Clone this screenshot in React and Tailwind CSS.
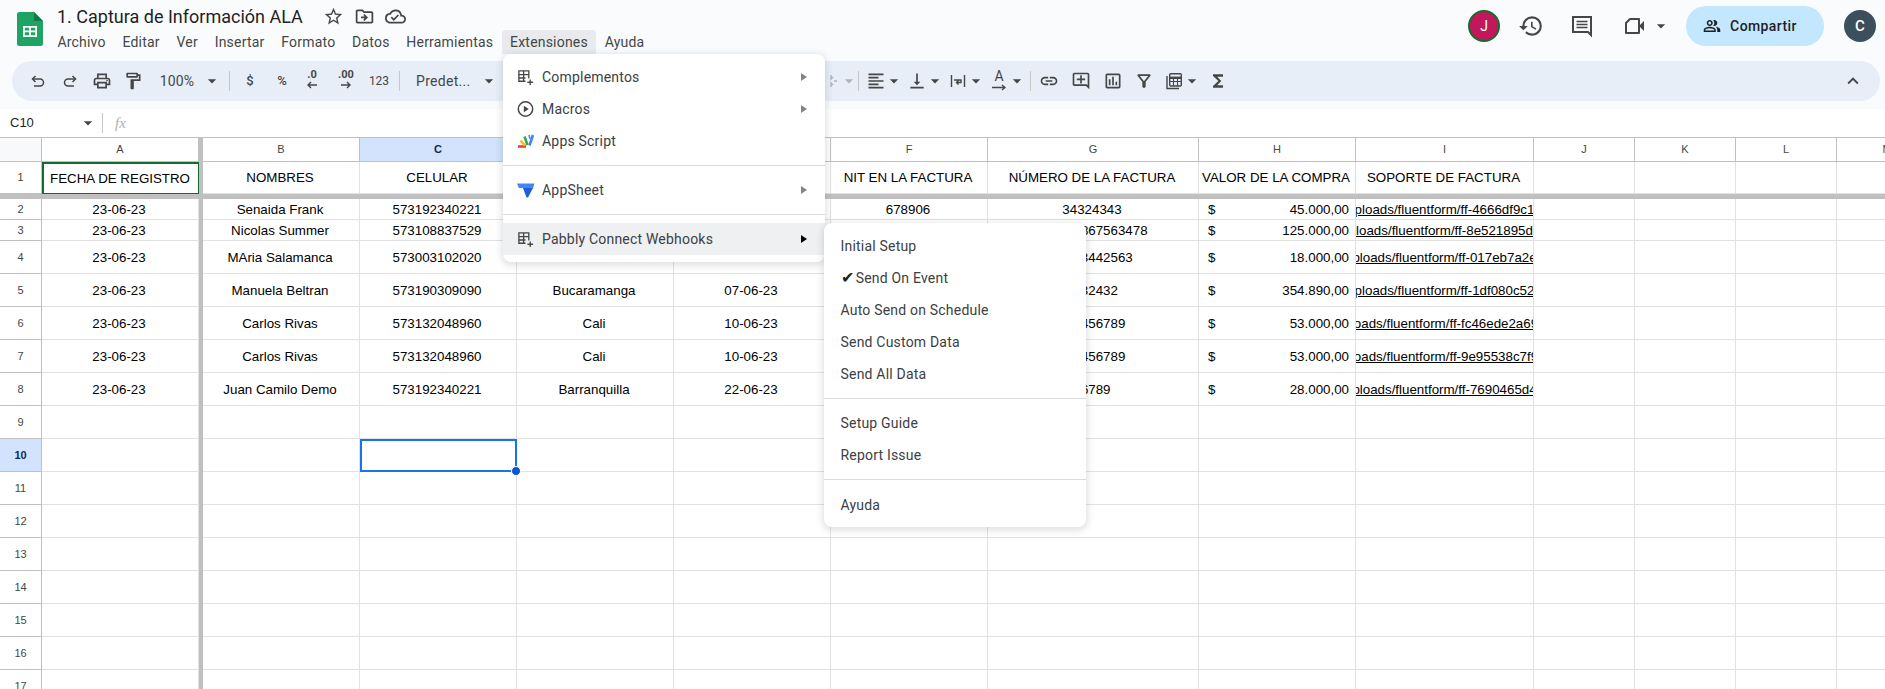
import React from "react";
import {
  MdOutlineLocalPrintshop,
  MdOutlineFormatPaint,
  MdArrowDropDown,
  MdStarBorder,
  MdOutlineDriveFileMove,
  MdOutlineCloudDone,
  MdHistory,
  MdOutlinePeopleAlt,
  MdFormatAlignLeft,
  MdVerticalAlignBottom,
  MdLink,
  MdOutlineAddComment,
  MdOutlineInsertChart,
  MdOutlineFilterAlt,
  MdFunctions,
  MdExpandLess,
} from "react-icons/md";

const gridCols =
  "grid grid-cols-[42px_157px_4px_157px_157px_157px_157px_157px_211px_157px_178px_101px_101px_101px_101px]";

const letters = ["A", "", "B", "C", "D", "E", "F", "G", "H", "I", "J", "K", "L", "M"];

const dataRows = [
  { n: 2, h: "h-[21px]", a: "23-06-23", b: "Senaida Frank", c: "573192340221", d: "Cali", e: "05-06-23", f: "678906", g: "34324343", v: "45.000,00", url: "uploads/fluentform/ff-4666df9c12" },
  { n: 3, h: "h-[21px]", a: "23-06-23", b: "Nicolas Summer", c: "573108837529", d: "Cali", e: "05-06-23", f: "", g: "123456867563478", v: "125.000,00", url: "ploads/fluentform/ff-8e521895de" },
  { n: 4, h: "h-[33px]", a: "23-06-23", b: "MAria Salamanca", c: "573003102020", d: "Cali", e: "06-06-23", f: "", g: "12343442563", v: "18.000,00", url: "ploads/fluentform/ff-017eb7a2e" },
  { n: 5, h: "h-[33px]", a: "23-06-23", b: "Manuela Beltran", c: "573190309090", d: "Bucaramanga", e: "07-06-23", f: "", g: "1232432", v: "354.890,00", url: "ploads/fluentform/ff-1df080c52" },
  { n: 6, h: "h-[33px]", a: "23-06-23", b: "Carlos Rivas", c: "573132048960", d: "Cali", e: "10-06-23", f: "", g: "123456789", v: "53.000,00", url: "loads/fluentform/ff-fc46ede2a69" },
  { n: 7, h: "h-[33px]", a: "23-06-23", b: "Carlos Rivas", c: "573132048960", d: "Cali", e: "10-06-23", f: "", g: "123456789", v: "53.000,00", url: "loads/fluentform/ff-9e95538c7f9" },
  { n: 8, h: "h-[33px]", a: "23-06-23", b: "Juan Camilo Demo", c: "573192340221", d: "Barranquilla", e: "22-06-23", f: "", g: "56789", v: "28.000,00", url: "ploads/fluentform/ff-7690465d4" },
];

const emptyRows = [9, 10, 11, 12, 13, 14, 15, 16, 17];

const cellClass =
  "flex items-center justify-center overflow-hidden whitespace-nowrap border-r border-b border-[#e1e1e1] pr-[2px] pt-px text-[13.33px] text-black";

const Caret = ({ className = "" }) => (
  <MdArrowDropDown className={`shrink-0 text-[20px] text-[#444746] ${className}`} />
);

const ToolBtn = ({ children, className = "" }) => (
  <div className={`flex h-7 w-[32px] shrink-0 items-center justify-center text-[#444746] ${className}`}>
    {children}
  </div>
);

const Divider = ({ className = "" }) => (
  <div className={`h-5 w-px shrink-0 bg-[#c7c7c7] ${className}`} />
);

const UndoIcon = ({ flip }) => (
  <svg width="18" height="18" viewBox="0 0 18 18" fill="none" stroke="#444746" strokeWidth="1.5" className={flip ? "-scale-x-100" : ""}>
    <path d="M6.5 4 3.5 7l3 3" />
    <path d="M3.5 7H11a3.2 3.2 0 0 1 0 7H5" />
  </svg>
);

const AddonIcon = () => (
  <svg width="17" height="17" viewBox="0 0 18 18" fill="none" stroke="#444746" strokeWidth="1.4">
    <path d="M12.5 10V2H2v11h7" />
    <path d="M2 6h10.5M7 2v11M2 9.5h7" />
    <path d="M14 11v6M11 14h6" />
  </svg>
);

const PlayIcon = () => (
  <svg width="18" height="18" viewBox="0 0 18 18" fill="none" stroke="#444746" strokeWidth="1.5">
    <circle cx="8.5" cy="9" r="7.2" />
    <path d="M6.8 5.8 11.8 9l-5 3.2z" fill="#444746" stroke="none" />
  </svg>
);

const AppsScriptIcon = () => (
  <svg width="18" height="18" viewBox="0 0 18 18" fill="none" strokeWidth="2.6">
    <path d="M1 14.5h8" stroke="#ea4335" />
    <path d="M3.5 8.5 8 13.5" stroke="#fbbc04" />
    <path d="M7.5 4.5 10.5 13" stroke="#34a853" />
    <path d="M16 3 12.5 13.5" stroke="#4285f4" />
    <path d="M12 3l1 4" stroke="#4285f4" strokeWidth="1.6" />
  </svg>
);

const AppSheetIcon = () => (
  <svg width="18" height="18" viewBox="0 0 18 18">
    <path d="M0 2.5h17.5L16 7H1.8z" fill="#4285f4" />
    <path d="M6 7h10l-5 9.5h-1.5z" fill="#1f5fd6" />
  </svg>
);

const SheetsLogo = () => (
  <svg width="26" height="34" viewBox="0 0 26 34" className="shrink-0">
    <path d="M2.5 0H17l9 9v22.5a2.5 2.5 0 0 1-2.5 2.5h-21A2.5 2.5 0 0 1 0 31.5v-29A2.5 2.5 0 0 1 2.5 0z" fill="#1ea362" />
    <path d="M17 0l9 9h-9z" fill="#0f7a43" />
    <path d="M6 14h14v11H6zm1.8 1.8v2.8h4.3v-2.8zm6.1 0v2.8h4.3v-2.8zm-6.1 4.5v2.9h4.3v-2.9zm6.1 0v2.9h4.3v-2.9z" fill="#fff" fillRule="evenodd" />
  </svg>
);

const CommentIcon = () => (
  <svg width="24" height="24" viewBox="0 0 24 24" fill="none" stroke="#444746" strokeWidth="2">
    <path d="M3 3h18v18l-3-3H3z" />
    <path d="M6.5 7.5h11M6.5 10.5h11M6.5 13.5h11" strokeWidth="1.6" />
  </svg>
);

const MeetIcon = () => (
  <svg width="24" height="24" viewBox="0 0 24 24" fill="none" stroke="#444746" strokeWidth="2">
    <path d="M7 5h9v14H3V9z" strokeLinejoin="round" />
    <path d="M16 12l5-5v10z" fill="#444746" stroke="none" />
  </svg>
);

const WrapIcon = () => (
  <svg width="18" height="18" viewBox="0 0 18 18" fill="none" stroke="#444746" strokeWidth="1.4">
    <path d="M2.5 3v12M15.5 3v12" />
    <path d="M5 8h7v2.5H8M9.5 8.5 7.5 10.5l2 2" />
  </svg>
);

const CalcIcon = () => (
  <svg width="20" height="20" viewBox="0 0 20 20" fill="none" stroke="#444746" strokeWidth="1.4">
    <path d="M3 5v12.5h12" />
    <rect x="5.7" y="2.7" width="11.6" height="12.3" rx="1" />
    <path d="M5.7 6.8h11.6" strokeWidth="2.4" />
    <path d="M5.7 10.5h11.6M9.5 8v7M13.5 8v7" strokeWidth="1.1" />
  </svg>
);

const Arrow = ({ dir }) => (
  <svg width="12" height="8" viewBox="0 0 12 8" className="-mt-[1px]" fill="none" stroke="#444746" strokeWidth="1.4">
    {dir === "left" ? <path d="M11 4H2M5 1 2 4l3 3" /> : <path d="M1 4h9M7 1l3 3-3 3" />}
  </svg>
);

const DecimalIcon = ({ label, dir }) => (
  <div className="flex h-7 flex-col items-center pt-[1px] text-[11px] font-bold leading-[14px] text-[#444746]">
    <span>{label}</span>
    <Arrow dir={dir} />
  </div>
);

const TextColorIcon = () => (
  <div className="flex h-7 flex-col items-center pt-[2px] text-[14px] leading-[15px] text-[#444746]">
    <span>A</span>
    <svg width="16" height="7" viewBox="0 0 16 7" fill="none" stroke="#444746" strokeWidth="1.3">
      <path d="M1 3.5h13M11 1l3 2.5L11 6" />
    </svg>
  </div>
);

const MenuItem = ({ icon, label, arrow, active }) => (
  <div className={`flex h-8 items-center ${active ? "bg-[#eff0f2]" : ""}`}>
    <div className="flex w-[38px] shrink-0 justify-end">
      <div className="flex w-[24px] justify-start">{icon}</div>
    </div>
    <span className="ml-[1px] flex-1 tracking-[0.2px]">{label}</span>
    {arrow && (
      <span className={`mr-[18px] h-0 w-0 border-y-[4px] border-l-[6px] border-y-transparent ${active ? "border-l-black" : "border-l-[#80868b]"}`} />
    )}
  </div>
);

const SubItem = ({ label, check }) => (
  <div className="flex h-8 items-center pl-[16.5px] tracking-[0.2px]">
    {check && <span className="mr-[2px] text-[16px] leading-none text-[#202124]">✔</span>}
    {label}
  </div>
);

const MenuSep = ({ className = "" }) => <div className={`h-px bg-[#dadce0] ${className}`} />;

const App = () => {
  return (
    <div className="relative h-screen w-full overflow-hidden bg-white font-['Roboto',sans-serif]">
      {/* header */}
      <div className="bg-[#f9fbfd]">
        <div className="flex h-[61px] items-start">
          <div className="ml-[17px] mt-[12px]">
            <SheetsLogo />
          </div>
          <div className="ml-[6px] flex-1">
            <div className="flex h-[24px] items-center pl-[8px] pt-[9px] text-[18px] text-[#1f1f1f]">
              <span className="w-[266px]">1. Captura de Información ALA</span>
              <div className="flex items-center gap-[10px] text-[#444746]">
                <MdStarBorder className="text-[21px]" />
                <MdOutlineDriveFileMove className="text-[21px]" />
                <MdOutlineCloudDone className="text-[21px]" />
              </div>
            </div>
            <div className="mt-[6px] flex h-[24px] items-center text-[14px] text-[#444746]">
              {["Archivo", "Editar", "Ver", "Insertar", "Formato", "Datos", "Herramientas"].map((m) => (
                <span key={m} className="px-[8.4px] tracking-[0.2px]">{m}</span>
              ))}
              <span className="flex h-[24px] items-center rounded-t bg-[#e8eaed] px-[8.4px] tracking-[0.2px]">Extensiones</span>
              <span className="px-[8.4px] tracking-[0.2px]">Ayuda</span>
            </div>
          </div>
          <div className="flex items-center pt-[6px]">
            <div className="flex h-8 w-8 items-center justify-center rounded-full border-2 border-[#146c2e] bg-[#c2185b] text-[14px] text-white">J</div>
            <div className="ml-[15px] flex w-[32px] justify-center text-[#444746]"><MdHistory className="text-[26px]" /></div>
            <div className="ml-[19px] flex w-[32px] justify-center"><CommentIcon /></div>
            <div className="ml-[25px] flex w-[52px] items-center"><MeetIcon /><Caret className="ml-[4px]" /></div>
            <div className="ml-[11px] flex h-10 w-[138px] items-center justify-center gap-[9px] rounded-full bg-[#c2e7ff] pr-[10px] text-[14px] font-medium tracking-[0.4px] text-[#1f1f1f]">
              <MdOutlinePeopleAlt className="text-[18px]" />
              Compartir
            </div>
            <div className="ml-[20px] mr-[9px] flex h-8 w-8 items-center justify-center rounded-full bg-[#3c4f5c] text-[15px] font-medium text-white">C</div>
          </div>
        </div>
        {/* toolbar */}
        <div className="pb-2 pl-[12px] pr-[5px]">
          <div className="flex h-10 items-center rounded-[20px] bg-[#e8eef8] pl-[10px] pr-[16px]">
            <ToolBtn><UndoIcon /></ToolBtn>
            <ToolBtn><UndoIcon flip /></ToolBtn>
            <ToolBtn><MdOutlineLocalPrintshop className="text-[20px]" /></ToolBtn>
            <ToolBtn className="!w-[30px]"><MdOutlineFormatPaint className="text-[20px]" /></ToolBtn>
            <ToolBtn className="!w-[78px] pl-[8px]">
              <span className="text-[14px] tracking-[0.2px]">100%</span>
              <Caret className="ml-[8px]" />
            </ToolBtn>
            <Divider className="ml-[3px]" />
            <ToolBtn className="ml-[4px] text-[13px] font-medium">$</ToolBtn>
            <ToolBtn className="text-[13px] font-medium">%</ToolBtn>
            <ToolBtn className="!w-[28px]"><DecimalIcon label=".0" dir="left" /></ToolBtn>
            <ToolBtn className="!w-[40px]"><DecimalIcon label=".00" dir="right" /></ToolBtn>
            <ToolBtn className="!w-[26px] text-[12px]">123</ToolBtn>
            <Divider className="ml-[7px]" />
            <ToolBtn className="ml-[16px] !w-[80px] !justify-start">
              <span className="text-[14px] tracking-[0.3px]">Predet...</span>
              <Caret className="ml-[8px]" />
            </ToolBtn>
            {/* under the open menu */}
            <div className="w-[325px] shrink-0" />
            <ToolBtn className="!w-[18px]">
              <svg width="14" height="14" viewBox="0 0 14 14" fill="none" stroke="#b0b4b8" strokeWidth="1.4">
                <path d="M8 1v4l2-2M8 13V9l2 2M11 7h3" />
              </svg>
            </ToolBtn>
            <Caret className="!text-[#b0b4b8]" />
            <Divider className="-ml-[1px]" />
            <ToolBtn className="ml-[6px] !w-[22px]"><MdFormatAlignLeft className="text-[20px]" /></ToolBtn>
            <Caret className="-ml-[3px]" />
            <ToolBtn className="!w-[26px]"><MdVerticalAlignBottom className="text-[20px]" /></ToolBtn>
            <Caret className="-ml-[5px]" />
            <ToolBtn className="!w-[26px]"><WrapIcon /></ToolBtn>
            <Caret className="-ml-[5px]" />
            <ToolBtn className="!w-[26px]"><TextColorIcon /></ToolBtn>
            <Caret className="-ml-[5px]" />
            <Divider className="ml-[3px]" />
            <ToolBtn className="ml-[2px]"><MdLink className="text-[20px]" /></ToolBtn>
            <ToolBtn><MdOutlineAddComment className="text-[20px]" /></ToolBtn>
            <ToolBtn className="!w-[31px]"><MdOutlineInsertChart className="text-[20px]" /></ToolBtn>
            <ToolBtn><MdOutlineFilterAlt className="text-[20px]" /></ToolBtn>
            <ToolBtn className="!w-[28px]"><CalcIcon /></ToolBtn>
            <Caret className="-ml-[6px]" />
            <ToolBtn><MdFunctions className="text-[20px]" /></ToolBtn>
            <div className="flex-1" />
            <MdExpandLess className="text-[22px] text-[#444746]" />
          </div>
        </div>
      </div>

      {/* formula bar */}
      <div className="flex h-[28px] items-center bg-white">
        <span className="ml-[10px] w-[68px] font-['Liberation_Sans',sans-serif] text-[13px] text-[#1f1f1f]">C10</span>
        <Caret />
        <div className="ml-[4px] h-5 w-px bg-[#c7c7c7]" />
        <span className="ml-[12px] font-['Liberation_Serif',serif] text-[15px] italic text-[#b0b0b0]">fx</span>
      </div>

      {/* sheet */}
      <div className="font-['Liberation_Sans',sans-serif]">
        <div className={`${gridCols} h-[25px] border-t border-[#c0c0c0]`}>
          <div className="border-r border-b border-[#c0c0c0] bg-[#f8f9fa]" />
          {letters.map((l, i) =>
            l === "" ? (
              <div key={i} className="bg-[#c0c0c0]" />
            ) : (
              <div
                key={i}
                className={`flex items-center justify-center border-r border-b border-[#c0c0c0] text-[11px] ${
                  l === "C" ? "bg-[#d3e3fd] font-bold text-[#0b2a5c]" : "text-[#444746]"
                }`}
              >
                {l}
              </div>
            )
          )}
        </div>

        <div className={`${gridCols} h-[32px]`}>
          <div className="flex items-center justify-center border-r border-b border-[#c0c0c0] text-[11px] text-[#444746]">1</div>
          <div className={`${cellClass} border-2 !border-[#146c2e]`}>FECHA DE REGISTRO</div>
          <div className="bg-[#c0c0c0]" />
          <div className={cellClass}>NOMBRES</div>
          <div className={cellClass}>CELULAR</div>
          <div className={cellClass}>CIUDAD</div>
          <div className={cellClass}>FECHA DE COMPRA</div>
          <div className={cellClass}>NIT EN LA FACTURA</div>
          <div className={cellClass}>NÚMERO DE LA FACTURA</div>
          <div className={cellClass}>VALOR DE LA COMPRA</div>
          <div className={cellClass}>SOPORTE DE FACTURA</div>
          <div className={cellClass} />
          <div className={cellClass} />
          <div className={cellClass} />
          <div className={cellClass} />
        </div>

        <div className="h-[5px] bg-[#c0c0c0]" />

        {dataRows.map((row) => (
          <div key={row.n} className={`${gridCols} ${row.h}`}>
            <div className="flex items-center justify-center border-r border-b border-[#c0c0c0] text-[11px] text-[#444746]">{row.n}</div>
            <div className={cellClass}>{row.a}</div>
            <div className="bg-[#c0c0c0]" />
            <div className={cellClass}>{row.b}</div>
            <div className={cellClass}>{row.c}</div>
            <div className={cellClass}>{row.d}</div>
            <div className={cellClass}>{row.e}</div>
            <div className={cellClass}>{row.f}</div>
            <div className={cellClass}>{row.g}</div>
            <div className={`${cellClass} !justify-between pl-[9px] !pr-[6px]`}>
              <span>$</span>
              <span>{row.v}</span>
            </div>
            <div className={`${cellClass} !pr-0`}>
              <span className="shrink-0 underline">{row.url}</span>
            </div>
            <div className={cellClass} />
            <div className={cellClass} />
            <div className={cellClass} />
            <div className={cellClass} />
          </div>
        ))}

        {emptyRows.map((n) => (
          <div key={n} className={`${gridCols} h-[33px]`}>
            <div
              className={`flex items-center justify-center border-r border-b border-[#c0c0c0] text-[11px] ${
                n === 10 ? "bg-[#d3e3fd] font-bold text-[#0b2a5c]" : "text-[#444746]"
              }`}
            >
              {n}
            </div>
            <div className={cellClass} />
            <div className="bg-[#c0c0c0]" />
            <div className={cellClass} />
            {n === 10 ? (
              <div className="relative border-2 border-[#1a73e8]">
                <span className="absolute -bottom-[6px] -right-[6px] h-[10px] w-[10px] rounded-full border border-white bg-[#0b57d0]" />
              </div>
            ) : (
              <div className={cellClass} />
            )}
            <div className={cellClass} />
            <div className={cellClass} />
            <div className={cellClass} />
            <div className={cellClass} />
            <div className={cellClass} />
            <div className={cellClass} />
            <div className={cellClass} />
            <div className={cellClass} />
            <div className={cellClass} />
            <div className={cellClass} />
          </div>
        ))}
      </div>

      {/* Extensiones menu */}
      <div className="absolute left-[503px] top-[54px] w-[322px] rounded-lg bg-white pb-[7px] pt-[7px] text-[14px] text-[#3c4043] shadow-[0_2px_6px_2px_rgba(60,64,67,0.15)]">
        <MenuItem icon={<AddonIcon />} label="Complementos" arrow />
        <MenuItem icon={<PlayIcon />} label="Macros" arrow />
        <MenuItem icon={<AppsScriptIcon />} label="Apps Script" />
        <MenuSep className="my-2" />
        <MenuItem icon={<AppSheetIcon />} label="AppSheet" arrow />
        <MenuSep className="my-2" />
        <MenuItem icon={<AddonIcon />} label="Pabbly Connect Webhooks" arrow active />
      </div>

      {/* Pabbly submenu */}
      <div className="absolute left-[824px] top-[223px] w-[262px] rounded-lg bg-white pb-[6px] pt-[7px] text-[14px] text-[#3c4043] shadow-[0_2px_6px_2px_rgba(60,64,67,0.15)]">
        <SubItem label="Initial Setup" />
        <SubItem label="Send On Event" check />
        <SubItem label="Auto Send on Schedule" />
        <SubItem label="Send Custom Data" />
        <SubItem label="Send All Data" />
        <MenuSep className="my-2" />
        <SubItem label="Setup Guide" />
        <SubItem label="Report Issue" />
        <MenuSep className="mb-[9px] mt-2" />
        <SubItem label="Ayuda" />
      </div>
    </div>
  );
};

export default App;
